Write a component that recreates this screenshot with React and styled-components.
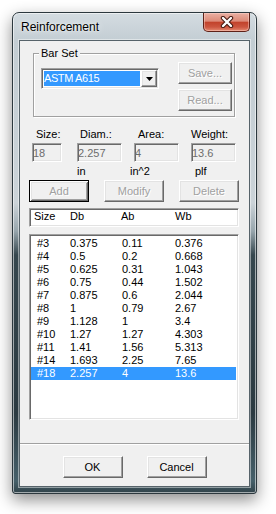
import React from 'react';
import styled, { createGlobalStyle, css } from 'styled-components';

const GlobalStyle = createGlobalStyle`
    html, body {
        margin: 0;
        padding: 0;
        background: #ffffff;
    }
    body {
        font-family: "Liberation Sans", Arial, sans-serif;
        font-size: 11px;
        color: #000;
    }
    * {
        box-sizing: border-box;
    }
`;

// classic 3D borders
const sunken = css`
    border: 1px solid;
    border-color: #a0a0a0 #ffffff #ffffff #a0a0a0;
    box-shadow: inset 1px 1px #696969, inset -1px -1px #e3e3e3;
`;

const raised = css`
    border: 1px solid;
    border-color: #ffffff #696969 #696969 #ffffff;
    box-shadow: inset -1px -1px #a0a0a0, inset 1px 1px #e3e3e3;
`;

const Page = styled.div`
    width: 276px;
    height: 514px;
    padding: 12px 0 0 12px;
    overflow: hidden;
`;

const Window = styled.div`
    width: 245px;
    height: 482px;
    display: flex;
    flex-direction: column;
    padding: 0 6px 6px 6px;

    border: 1px solid #2c383e;
    border-radius: 7px 7px 3px 3px;
    background: linear-gradient(
        180deg,
        #d4dce1 0px,
        #c3cdd3 28px,
        #cbd3d8 190px,
        #98a6ad 218px,
        #36474e 242px,
        #2b3a41 400px,
        #46606a 468px,
        #2d3d44 482px
    );
    box-shadow: 0 6px 16px rgba(0, 0, 0, 0.45), inset 0 0 0 1px rgba(255, 255, 255, 0.55);
`;

const TitleBar = styled.div`
    height: 27px;
    display: flex;
    align-items: flex-start;
`;

const Title = styled.span`
    padding: 7px 0 0 2px;
    font-size: 12px;
    line-height: 15px;
    color: #000;
    text-shadow: 0 0 6px rgba(255, 255, 255, 0.9), 0 0 2px rgba(255, 255, 255, 0.8);
`;

const CloseButton = styled.div`
    margin-left: auto;
    width: 47px;
    height: 19px;
    display: flex;
    align-items: center;
    justify-content: center;

    border: 1px solid #5e2118;
    border-top: 0;
    border-radius: 0 0 5px 5px;
    background: linear-gradient(180deg, #eab0a3 0%, #dc8a78 45%, #c2432c 52%, #cc5640 78%, #e58b72 100%);
    box-shadow: inset 0 0 0 1px rgba(255, 220, 210, 0.45);
`;

const Client = styled.div`
    flex: 1;
    display: flex;
    flex-direction: column;
    background: #f0f0f0;
    border: 1px solid #56636a;
    box-shadow: 0 0 0 1px rgba(255, 255, 255, 0.45);
`;

const GroupBox = styled.fieldset`
    margin: 5px 14px 0 13px;
    padding: 2px 2px 5px 5px;
    min-inline-size: 0;
    border: 1px solid #a0a0a0;
    box-shadow: inset 1px 1px #ffffff, 1px 1px #ffffff;
`;

const Legend = styled.legend`
    padding: 0 2px;
    font-size: 11px;
    line-height: 14px;
    background: #f0f0f0;
`;

const GroupBody = styled.div`
    display: flex;
    justify-content: space-between;
    align-items: flex-start;
`;

const Combo = styled.div`
    width: 118px;
    height: 21px;
    margin: 6px 0 0 2px;
    padding: 1px;
    display: flex;
    ${sunken};
    background: #ffffff;
`;

const ComboValue = styled.div`
    flex: 1;
    margin: 1px 1px 1px 1px;
    padding-left: 0;
    background: #3399ff;
    color: #ffffff;
    line-height: 15px;
    letter-spacing: -0.4px;
    white-space: nowrap;
    overflow: hidden;
`;

const DropButton = styled.div`
    width: 16px;
    height: 17px;
    display: flex;
    align-items: center;
    justify-content: center;
    ${raised};
    background: #f0f0f0;
`;

const ButtonStack = styled.div`
    display: flex;
    flex-direction: column;
    gap: 5px;
`;

const Button = styled.button`
    width: ${p => p.$w || 60}px;
    height: 22px;
    padding: 0;
    margin: 0;
    font-family: "Liberation Sans", Arial, sans-serif;
    font-size: 11px;
    color: #000;
    background: #f0f0f0;
    ${raised};

    ${p => p.$default && css`
        border-color: #000;
        box-shadow: inset 1px 1px #ffffff, inset -1px -1px #696969,
            inset 2px 2px #e3e3e3, inset -2px -2px #a0a0a0;
    `}

    &:disabled {
        color: #a0a0a0;
        text-shadow: 1px 1px #ffffff;
    }
`;

const Fields = styled.div`
    display: flex;
    margin-top: 11px;
    padding-left: 12px;
`;

const FieldCol = styled.div`
    display: flex;
    flex-direction: column;
    width: ${p => p.$w}px;
    margin-left: ${p => p.$gap}px;
`;

const FieldLabel = styled.div`
    height: 13px;
    line-height: 13px;
    padding-left: ${p => p.$shift}px;
    white-space: nowrap;
`;

const FieldInput = styled.input`
    width: 100%;
    height: 19px;
    margin-top: 2px;
    padding: 0;
    ${sunken};
    background: #f0f0f0;
    color: #6d6d6d;
    font-family: "Liberation Sans", Arial, sans-serif;
    font-size: 11px;
    outline: 0;
`;

const Unit = styled.div`
    height: 13px;
    margin-top: 3px;
    line-height: 13px;
    margin-left: ${p => p.$shift || 0}px;
    white-space: nowrap;
`;

const ActionRow = styled.div`
    display: flex;
    justify-content: space-between;
    margin-top: 2px;
    padding: 0 10px 0 9px;
`;

const HeaderBox = styled.div`
    width: 210px;
    height: 19px;
    margin: 6px 0 0 9px;
    padding: 1px 0 0 4px;
    ${sunken};
    background: #ffffff;
    display: grid;
    grid-template-columns: 36px 51px 54px 1fr;
    line-height: 13px;
`;

const ListBox = styled.div`
    width: 210px;
    height: 186px;
    margin: 7px 0 0 9px;
    padding: 2px 2px 0 1px;
    ${sunken};
    background: #ffffff;
`;

const Row = styled.div`
    display: grid;
    grid-template-columns: 33px 52px 53px 1fr;
    height: 13px;
    line-height: 13px;
    padding-left: 6px;
    white-space: nowrap;
    background: ${p => (p.$sel ? '#3399ff' : 'transparent')};
    color: ${p => (p.$sel ? '#ffffff' : '#000000')};
`;

const Separator = styled.div`
    margin-top: 23px;
    border-top: 1px solid #a0a0a0;
    border-bottom: 1px solid #ffffff;
`;

const Footer = styled.div`
    display: flex;
    justify-content: center;
    gap: 24px;
    margin-top: 11px;
`;

const bars = [
    ['#3', '0.375', '0.11', '0.376'],
    ['#4', '0.5', '0.2', '0.668'],
    ['#5', '0.625', '0.31', '1.043'],
    ['#6', '0.75', '0.44', '1.502'],
    ['#7', '0.875', '0.6', '2.044'],
    ['#8', '1', '0.79', '2.67'],
    ['#9', '1.128', '1', '3.4'],
    ['#10', '1.27', '1.27', '4.303'],
    ['#11', '1.41', '1.56', '5.313'],
    ['#14', '1.693', '2.25', '7.65'],
    ['#18', '2.257', '4', '13.6'],
];

const fields = [
    { label: 'Size:', value: '18', unit: '', w: 30, gap: 0, labelShift: 4, unitShift: 0 },
    { label: 'Diam.:', value: '2.257', unit: 'in', w: 45, gap: 15, labelShift: 3, unitShift: 0 },
    { label: 'Area:', value: '4', unit: 'in^2', w: 45, gap: 12, labelShift: 4, unitShift: -4 },
    { label: 'Weight:', value: '13.6', unit: 'plf', w: 45, gap: 12, labelShift: 0, unitShift: 4 },
];

function App() {
    return (
        <Page>
            <GlobalStyle />
            <Window>
                <TitleBar>
                    <Title>Reinforcement</Title>
                    <CloseButton>
                        <svg width="14" height="12" viewBox="0 0 14 12">
                            <path d="M3 2 L11 10 M11 2 L3 10" stroke="#43180f" strokeWidth="4.4" strokeLinecap="round" fill="none" />
                            <path d="M3 2 L11 10 M11 2 L3 10" stroke="#ffffff" strokeWidth="2.4" strokeLinecap="round" fill="none" />
                        </svg>
                    </CloseButton>
                </TitleBar>
                <Client>
                    <GroupBox>
                        <Legend>Bar Set</Legend>
                        <GroupBody>
                            <Combo>
                                <ComboValue>ASTM A615</ComboValue>
                                <DropButton>
                                    <svg width="7" height="4" viewBox="0 0 7 4">
                                        <polygon points="0,0 7,0 3.5,4" fill="#000" />
                                    </svg>
                                </DropButton>
                            </Combo>
                            <ButtonStack>
                                <Button $w={54} disabled>Save...</Button>
                                <Button $w={54} disabled>Read...</Button>
                            </ButtonStack>
                        </GroupBody>
                    </GroupBox>

                    <Fields>
                        {fields.map(f => (
                            <FieldCol key={f.label} $w={f.w} $gap={f.gap}>
                                <FieldLabel $shift={f.labelShift}>{f.label}</FieldLabel>
                                <FieldInput readOnly value={f.value} />
                                <Unit $shift={f.unitShift}>{f.unit}</Unit>
                            </FieldCol>
                        ))}
                    </Fields>

                    <ActionRow>
                        <Button $default disabled>Add</Button>
                        <Button disabled>Modify</Button>
                        <Button disabled>Delete</Button>
                    </ActionRow>

                    <HeaderBox>
                        <span>Size</span>
                        <span>Db</span>
                        <span>Ab</span>
                        <span>Wb</span>
                    </HeaderBox>

                    <ListBox>
                        {bars.map((b, i) => (
                            <Row key={b[0]} $sel={i === bars.length - 1}>
                                {b.map((cell, j) => (
                                    <span key={j}>{cell}</span>
                                ))}
                            </Row>
                        ))}
                    </ListBox>

                    <Separator />

                    <Footer>
                        <Button>OK</Button>
                        <Button>Cancel</Button>
                    </Footer>
                </Client>
            </Window>
        </Page>
    );
}

export default App;
